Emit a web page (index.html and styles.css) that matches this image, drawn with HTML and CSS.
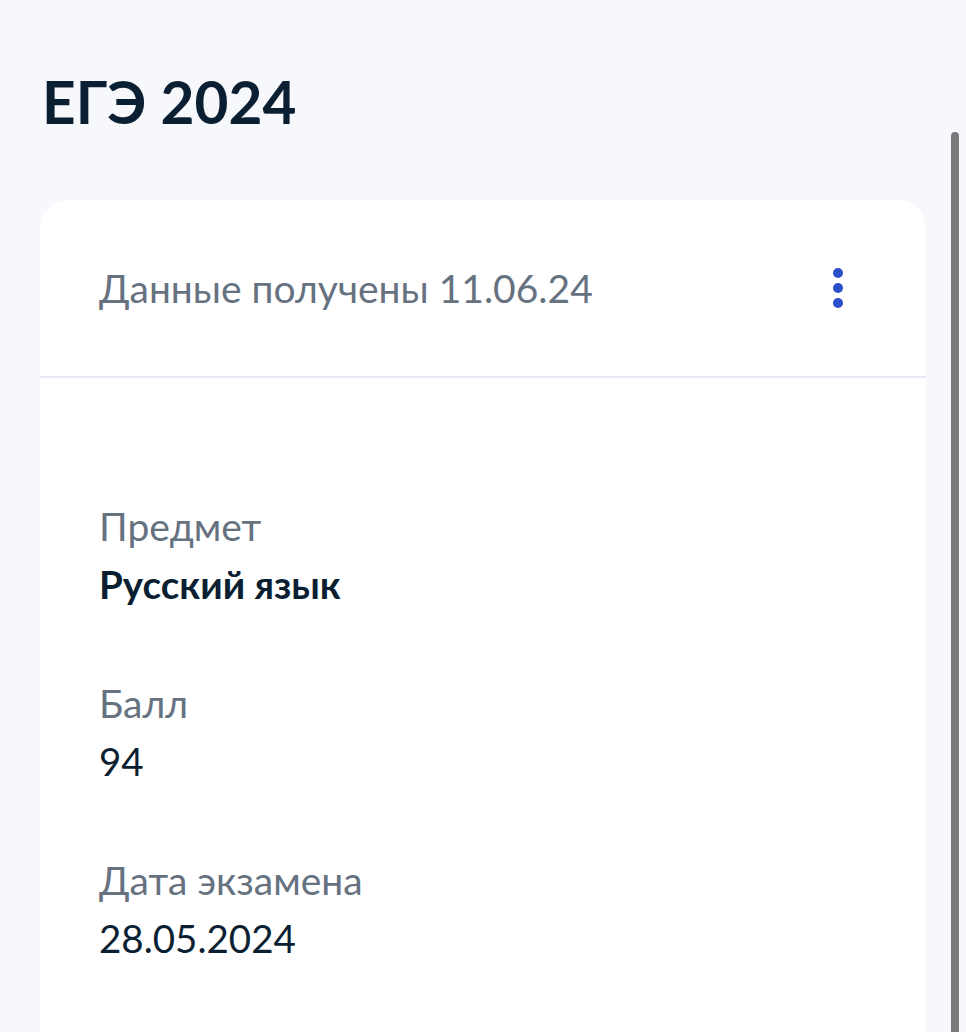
FILE: index.html
```html
<!DOCTYPE html>
<html lang="ru">
<head>
<meta charset="utf-8">
<title>ЕГЭ 2024</title>
<link rel="stylesheet" href="styles.css">
</head>
<body>
<main class="page">
  <h1 class="title">ЕГЭ 2024</h1>
  <section class="card">
    <header class="card-head">
      <span class="received">Данные получены 11.06.24</span>
      <button class="more" aria-label="Ещё">
        <svg width="12" height="42" viewBox="0 0 12 42"><circle cx="6" cy="6" r="5" fill="#2b4fc8"/><circle cx="6" cy="21" r="5" fill="#2b4fc8"/><circle cx="6" cy="36" r="5" fill="#2b4fc8"/></svg>
      </button>
    </header>
    <div class="card-body">
      <div class="field">
        <div class="label">Предмет</div>
        <div class="value bold">Русский язык</div>
      </div>
      <div class="field">
        <div class="label">Балл</div>
        <div class="value">94</div>
      </div>
      <div class="field">
        <div class="label">Дата экзамена</div>
        <div class="value">28.05.2024</div>
      </div>
    </div>
  </section>
</main>
<div class="scrollbar"></div>
</body>
</html>
```
FILE: styles.css
```css
html, body {
  margin: 0;
  padding: 0;
  height: 100%;
  overflow: hidden;
}
body {
  background: #f7f8fc;
  font-family: Lato, "Noto Sans", sans-serif;
  color: #0b1f33;
}
.page {
  padding: 0 40px;
}
.title {
  margin: 0;
  padding-top: 66px;
  font-size: 58.5px;
  line-height: 70px;
  font-weight: 700;
  color: #0b1f33;
  padding-left: 2px;
}
.card {
  margin-top: 64px;
  width: 886px;
  background: #fff;
  border-radius: 28px;
  min-height: 900px;
}
.card-head {
  height: 176px;
  display: flex;
  align-items: center;
  justify-content: space-between;
  padding: 0 82px 0 59px;
  border-bottom: 2px solid #e6eaf2;
}
.received {
  font-size: 39px;
  color: #66727f;
}
.more {
  border: 0;
  background: none;
  padding: 0;
  display: flex;
}
.card-body {
  padding: 119px 59px 0;
  display: flex;
  flex-direction: column;
  gap: 61px;
}
.label {
  font-size: 39px;
  line-height: 58px;
  color: #66727f;
}
.value {
  margin-top: 1px;
  font-size: 38.5px;
  line-height: 57px;
  color: #0b1f33;
}
.value.bold {
  font-weight: 700;
  font-size: 38.5px;
}
.scrollbar {
  position: absolute;
  left: 951px;
  top: 132px;
  width: 8px;
  height: 920px;
  border-radius: 4px;
  background: #7a7a7a;
}
```
